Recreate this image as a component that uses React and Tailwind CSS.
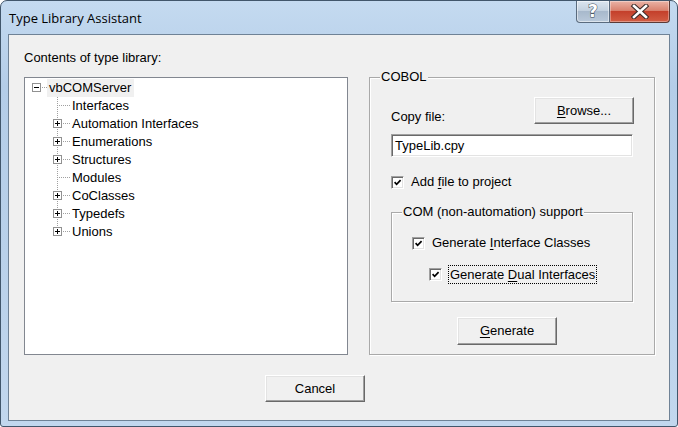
import React from "react";

const sans = "font-['Liberation_Sans',Arial,sans-serif]";

// classic 3D push button
const Button = ({ children, className = "" }) => (
  <button
    className={`h-[27px] w-[100px] bg-[#f0f0f0] border border-t-white border-l-white border-r-[#696969] border-b-[#696969] shadow-[inset_-1px_-1px_0_#a0a0a0,inset_1px_1px_0_#e3e3e3] text-[13px] text-black flex items-center justify-center ${className}`}
  >
    {children}
  </button>
);

const CheckBox = () => (
  <span className="relative block w-[13px] h-[13px] shrink-0 bg-white border border-t-[#a0a0a0] border-l-[#a0a0a0] border-r-white border-b-white shadow-[inset_1px_1px_0_#696969,inset_-1px_-1px_0_#e3e3e3]">
    <svg width="11" height="11" viewBox="0 0 11 11" className="absolute left-0 top-0">
      <path d="M2.6 5.2 L4.6 7.3 L8.6 3.1" fill="none" stroke="#000" strokeWidth="1.7" />
    </svg>
  </span>
);

const GroupBox = ({ label, className = "", children }) => (
  <div className={`relative border border-[#a9a9a9] shadow-[1px_1px_0_#fff,inset_1px_1px_0_#fff] ${className}`}>
    <span className="absolute left-[10px] top-[-9px] bg-[#f0f0f0] px-[1px] text-[13px] leading-[16px]">
      {label}
    </span>
    {children}
  </div>
);

const treeChildren = [
  { name: "Interfaces", leaf: true },
  { name: "Automation Interfaces" },
  { name: "Enumerations" },
  { name: "Structures" },
  { name: "Modules", leaf: true },
  { name: "CoClasses" },
  { name: "Typedefs" },
  { name: "Unions", last: true },
];

const ExpandBox = ({ x, minus }) => (
  <>
    <rect x={x + 0.5} y="4.5" width="8" height="8" fill="#fff" stroke="#919191" shapeRendering="crispEdges" />
    <line x1={x + 2} y1="8.5" x2={x + 7} y2="8.5" stroke="#000" shapeRendering="crispEdges" />
    {!minus && <line x1={x + 4.5} y1="6" x2={x + 4.5} y2="11" stroke="#000" shapeRendering="crispEdges" />}
  </>
);

const Tree = () => (
  <div className="w-[324px] h-[278px] bg-white border border-[#828790] pt-[1px] text-[13px] leading-[18px]">
    <div className="flex h-[18px]">
      <svg width="22" height="18" className="shrink-0">
        <ExpandBox x={7} minus />
        <line x1="17" y1="8.5" x2="22" y2="8.5" stroke="#a0a0a0" strokeDasharray="1 1" shapeRendering="crispEdges" />
      </svg>
      <span className="bg-[#f0f0f0] pl-[2px] pr-[3px] h-[18px]">vbCOMServer</span>
    </div>
    {treeChildren.map((item) => (
      <div key={item.name} className="flex h-[18px]">
        <svg width="46" height="18" className="shrink-0">
          <line x1="32.5" y1="0" x2="32.5" y2={item.last ? 9 : 18} stroke="#a0a0a0" strokeDasharray="1 1" shapeRendering="crispEdges" />
          <line x1={item.leaf ? 34 : 38} y1="8.5" x2="46" y2="8.5" stroke="#a0a0a0" strokeDasharray="1 1" shapeRendering="crispEdges" />
          {!item.leaf && <ExpandBox x={28} />}
        </svg>
        <span className="pl-[1px]">{item.name}</span>
      </div>
    ))}
  </div>
);

const TitleBar = () => (
  <div className="h-[33px] flex items-start">
    <span className="pl-[8px] pt-[8px] text-[13px] text-black font-['Open_Sans',sans-serif]">
      Type Library Assistant
    </span>
    <div className="ml-auto mr-[7px] flex">
      <div className="w-[34px] h-[22px] rounded-bl-[4px] border border-t-0 border-[#5a6b7e] bg-[linear-gradient(180deg,#dbe5ef_0%,#c3d1df_45%,#a8b9cc_50%,#b9c9da_100%)] flex items-center justify-center shadow-[inset_0_0_0_1px_rgba(255,255,255,0.5)]">
        <span className="text-[17px] leading-[17px] font-bold text-white [-webkit-text-stroke:1px_#3a4654] [paint-order:stroke_fill] font-['DejaVu_Sans',sans-serif]">?</span>
      </div>
      <div className="w-[60px] h-[22px] rounded-br-[4px] border border-l-0 border-t-0 border-[#5a3a36] bg-[linear-gradient(180deg,#eab3a6_0%,#d9826f_45%,#c4402b_50%,#d25d44_100%)] flex items-center justify-center shadow-[inset_0_0_0_1px_rgba(255,255,255,0.35)]">
        <svg width="20" height="15" viewBox="0 0 20 15">
          <path d="M4 2 L16 13 M16 2 L4 13" fill="none" stroke="#3a2a28" strokeWidth="4.6" strokeLinecap="square" />
          <path d="M4 2 L16 13 M16 2 L4 13" fill="none" stroke="#fff" strokeWidth="2.6" strokeLinecap="square" />
        </svg>
      </div>
    </div>
  </div>
);

export default function App() {
  return (
    <div className={`w-[678px] h-[427px] overflow-hidden ${sans}`}>
      <div className="w-[678px] h-[427px] rounded-t-[7px] rounded-b-[3px] border border-[#41566b] bg-[linear-gradient(180deg,#c4daf0_0%,#b4cde8_20%,#b9d1ea_60%,#c2d7ee_100%)]">
        <TitleBar />
        <div className="mx-[7px] h-[387px] border border-[#6f8296] bg-[#f0f0f0] text-black">
          <div className="pl-[15px] pt-[15px] text-[13px] leading-[16px]">Contents of type library:</div>
          <div className="flex pl-[15px] mt-[11px]">
            <Tree />
            <GroupBox label="COBOL" className="ml-[21px] w-[286px] h-[278px] pl-[21px] pt-[19px]">
              <div className="flex items-start w-[242px]">
                <span className="text-[13px] leading-[16px] mt-[12px]">Copy file:</span>
                <Button className="ml-auto mr-[-1px]">
                  <span><span className="underline underline-offset-2">B</span>rowse...</span>
                </Button>
              </div>
              <div className="mt-[9px] w-[242px] h-[23px] bg-white border border-t-[#a0a0a0] border-l-[#a0a0a0] border-r-white border-b-white shadow-[inset_1px_1px_0_#696969,inset_-1px_-1px_0_#e3e3e3] pl-[3px] text-[13px] leading-[21px]">
                TypeLib.cpy
              </div>
              <div className="mt-[17px] flex items-center gap-[7px] text-[13px] leading-[16px]">
                <CheckBox />
                <span>Add <span className="underline underline-offset-2">f</span>ile to project</span>
              </div>
              <GroupBox label="COM (non-automation) support" className="mt-[22px] w-[242px] h-[90px] pl-[20px] pt-[22px]">
                <div className="flex items-center gap-[7px] text-[13px] leading-[16px]">
                  <CheckBox />
                  <span>Generate <span className="underline underline-offset-2">I</span>nterface Classes</span>
                </div>
                <div className="mt-[14px] ml-[17px] flex items-center gap-[6px] text-[13px] leading-[16px]">
                  <CheckBox />
                  <span className="border border-dotted border-black px-[1px] h-[19px] leading-[17px]">
                    Generate <span className="underline underline-offset-2">D</span>ual Interfaces
                  </span>
                </div>
              </GroupBox>
              <Button className="mt-[15px] ml-[66px] h-[28px]">
                <span><span className="underline underline-offset-2">G</span>enerate</span>
              </Button>
            </GroupBox>
          </div>
          <Button className="mt-[20px] ml-[256px]">Cancel</Button>
        </div>
      </div>
    </div>
  );
}
